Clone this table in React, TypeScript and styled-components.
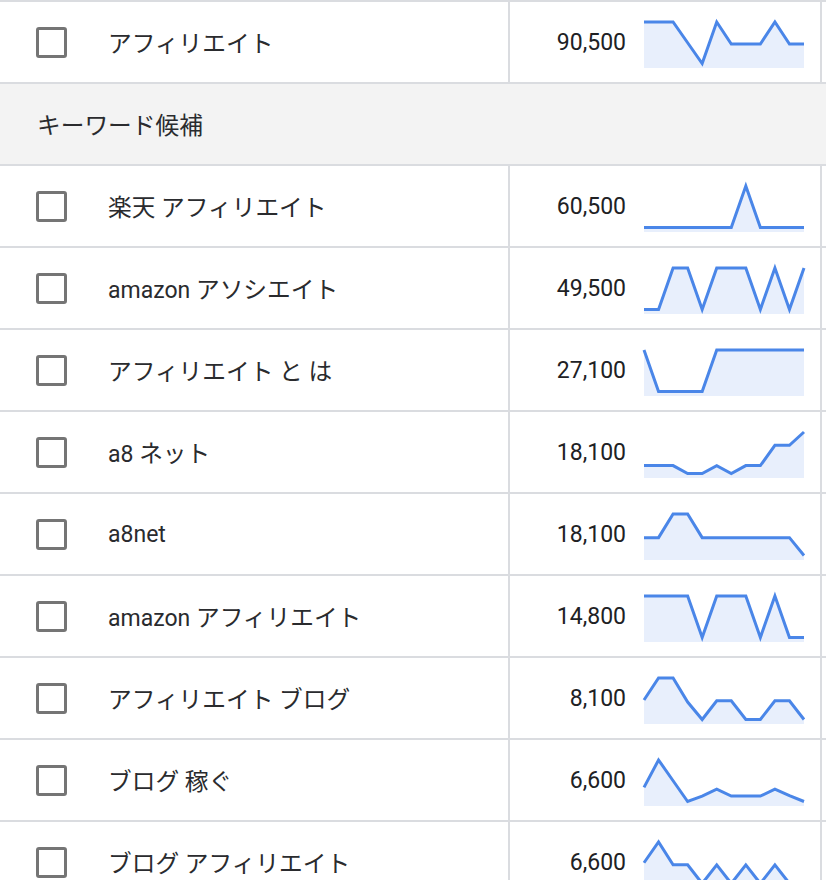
import React from "react";
import styled, { createGlobalStyle } from "styled-components";

const GlobalStyle = createGlobalStyle`
  html, body {
    margin: 0;
    padding: 0;
    background: #ffffff;
  }
  body {
    font-family: Roboto, "Noto Sans CJK JP", sans-serif;
    color: #202124;
  }
`;

const Table = styled.div`
  width: 826px;
  border-top: 2px solid #dadce0;
`;

const Row = styled.div`
  display: grid;
  grid-template-columns: 510px 312px 1fr;
  height: 80px;
  border-bottom: 2px solid #dadce0;
`;

const SectionRow = styled.div`
  display: flex;
  align-items: center;
  height: 80px;
  padding-left: 37px;
  background: #f3f3f3;
  border-bottom: 2px solid #dadce0;
  font-size: 23px;
  color: #2a2b2e;
`;

const KeywordCell = styled.div`
  display: flex;
  align-items: center;
  padding-left: 36px;
  border-right: 2px solid #dadce0;
`;

const Checkbox = styled.span`
  box-sizing: border-box;
  width: 31px;
  height: 31px;
  border: 3px solid #757575;
  border-radius: 3px;
  flex: none;
`;

const Keyword = styled.span`
  margin-left: 41px;
  font-size: 23px;
  color: #2a2b2e;
  white-space: nowrap;
`;

const Cjk = styled.span`
  font-size: 23.7px;
`;

const VolumeCell = styled.div`
  display: flex;
  align-items: center;
  justify-content: flex-end;
  padding-right: 16px;
  border-right: 2px solid #dadce0;
`;

const Volume = styled.span`
  font-size: 23px;
  color: #202124;
`;

const Spark = styled.svg`
  width: 160px;
  height: 50px;
  margin-left: 18px;
  align-self: flex-start;
  margin-top: 16px;
  overflow: visible;
  flex: none;
`;

const Filler = styled.div``;

const W = 160;
const H = 50;
const TOP = 4;
const RANGE = 41.5;

function Sparkline({ values }: { values: number[] }) {
  const step = W / (values.length - 1);
  const pts = values.map((v, i) => [i * step, TOP + (1 - v) * RANGE]);
  const line = pts.map((p) => `${p[0].toFixed(2)},${p[1].toFixed(2)}`).join(" ");
  const area = `0,${H} ${line} ${W},${H}`;
  return (
    <Spark viewBox={`0 0 ${W} ${H}`}>
      <polygon points={area} fill="#e8effc" />
      <polyline
        points={line}
        fill="none"
        stroke="#4a86e8"
        strokeWidth={3}
        strokeLinejoin="miter"
        strokeMiterlimit={10}
      />
    </Spark>
  );
}

const CJK_RE = /([\u3000-\u30ff\u4e00-\u9fff\uff00-\uffef]+)/;

function MixedText({ text }: { text: string }) {
  const parts = text.split(CJK_RE).filter((p) => p !== "");
  return (
    <>
      {parts.map((p, i) => (CJK_RE.test(p) ? <Cjk key={i}>{p}</Cjk> : <React.Fragment key={i}>{p}</React.Fragment>))}
    </>
  );
}

type Item = { kw: string; vol: string; data: number[] };

const top: Item = {
  kw: "アフィリエイト",
  vol: "90,500",
  data: [1, 1, 1, 0.5, 0, 1, 0.47, 0.47, 0.47, 1, 0.47, 0.47],
};

const items: Item[] = [
  { kw: "楽天 アフィリエイト", vol: "60,500", data: [0, 0, 0, 0, 0, 0, 0, 1, 0, 0, 0, 0] },
  { kw: "amazon アソシエイト", vol: "49,500", data: [0, 0, 1, 1, 0, 1, 1, 1, 0, 1, 0, 1] },
  { kw: "アフィリエイト と は", vol: "27,100", data: [1, 0, 0, 0, 0, 1, 1, 1, 1, 1, 1, 1] },
  { kw: "a8 ネット", vol: "18,100", data: [0.19, 0.19, 0.19, 0, 0, 0.19, 0, 0.19, 0.19, 0.68, 0.68, 1] },
  { kw: "a8net", vol: "18,100", data: [0.43, 0.43, 1, 1, 0.43, 0.43, 0.43, 0.43, 0.43, 0.43, 0.43, 0] },
  { kw: "amazon アフィリエイト", vol: "14,800", data: [1, 1, 1, 1, 0, 1, 1, 1, 0, 1, 0, 0] },
  { kw: "アフィリエイト ブログ", vol: "8,100", data: [0.47, 1, 1, 0.42, 0, 0.45, 0.45, 0, 0, 0.45, 0.45, 0] },
  { kw: "ブログ 稼ぐ", vol: "6,600", data: [0.34, 1, 0.5, 0, 0.13, 0.3, 0.13, 0.13, 0.13, 0.3, 0.14, 0] },
  { kw: "ブログ アフィリエイト", vol: "6,600", data: [0.5, 1, 0.45, 0.45, 0, 0.45, 0, 0.45, 0, 0.45, 0, 0] },
];

function KeywordRow({ item }: { item: Item }) {
  return (
    <Row>
      <KeywordCell>
        <Checkbox />
        <Keyword>
          <MixedText text={item.kw} />
        </Keyword>
      </KeywordCell>
      <VolumeCell>
        <Volume>{item.vol}</Volume>
        <Sparkline values={item.data} />
      </VolumeCell>
      <Filler />
    </Row>
  );
}

export default function App() {
  return (
    <>
      <GlobalStyle />
      <Table>
        <KeywordRow item={top} />
        <SectionRow>
          <MixedText text="キーワード候補" />
        </SectionRow>
        {items.map((it, i) => (
          <KeywordRow key={i} item={it} />
        ))}
      </Table>
    </>
  );
}
